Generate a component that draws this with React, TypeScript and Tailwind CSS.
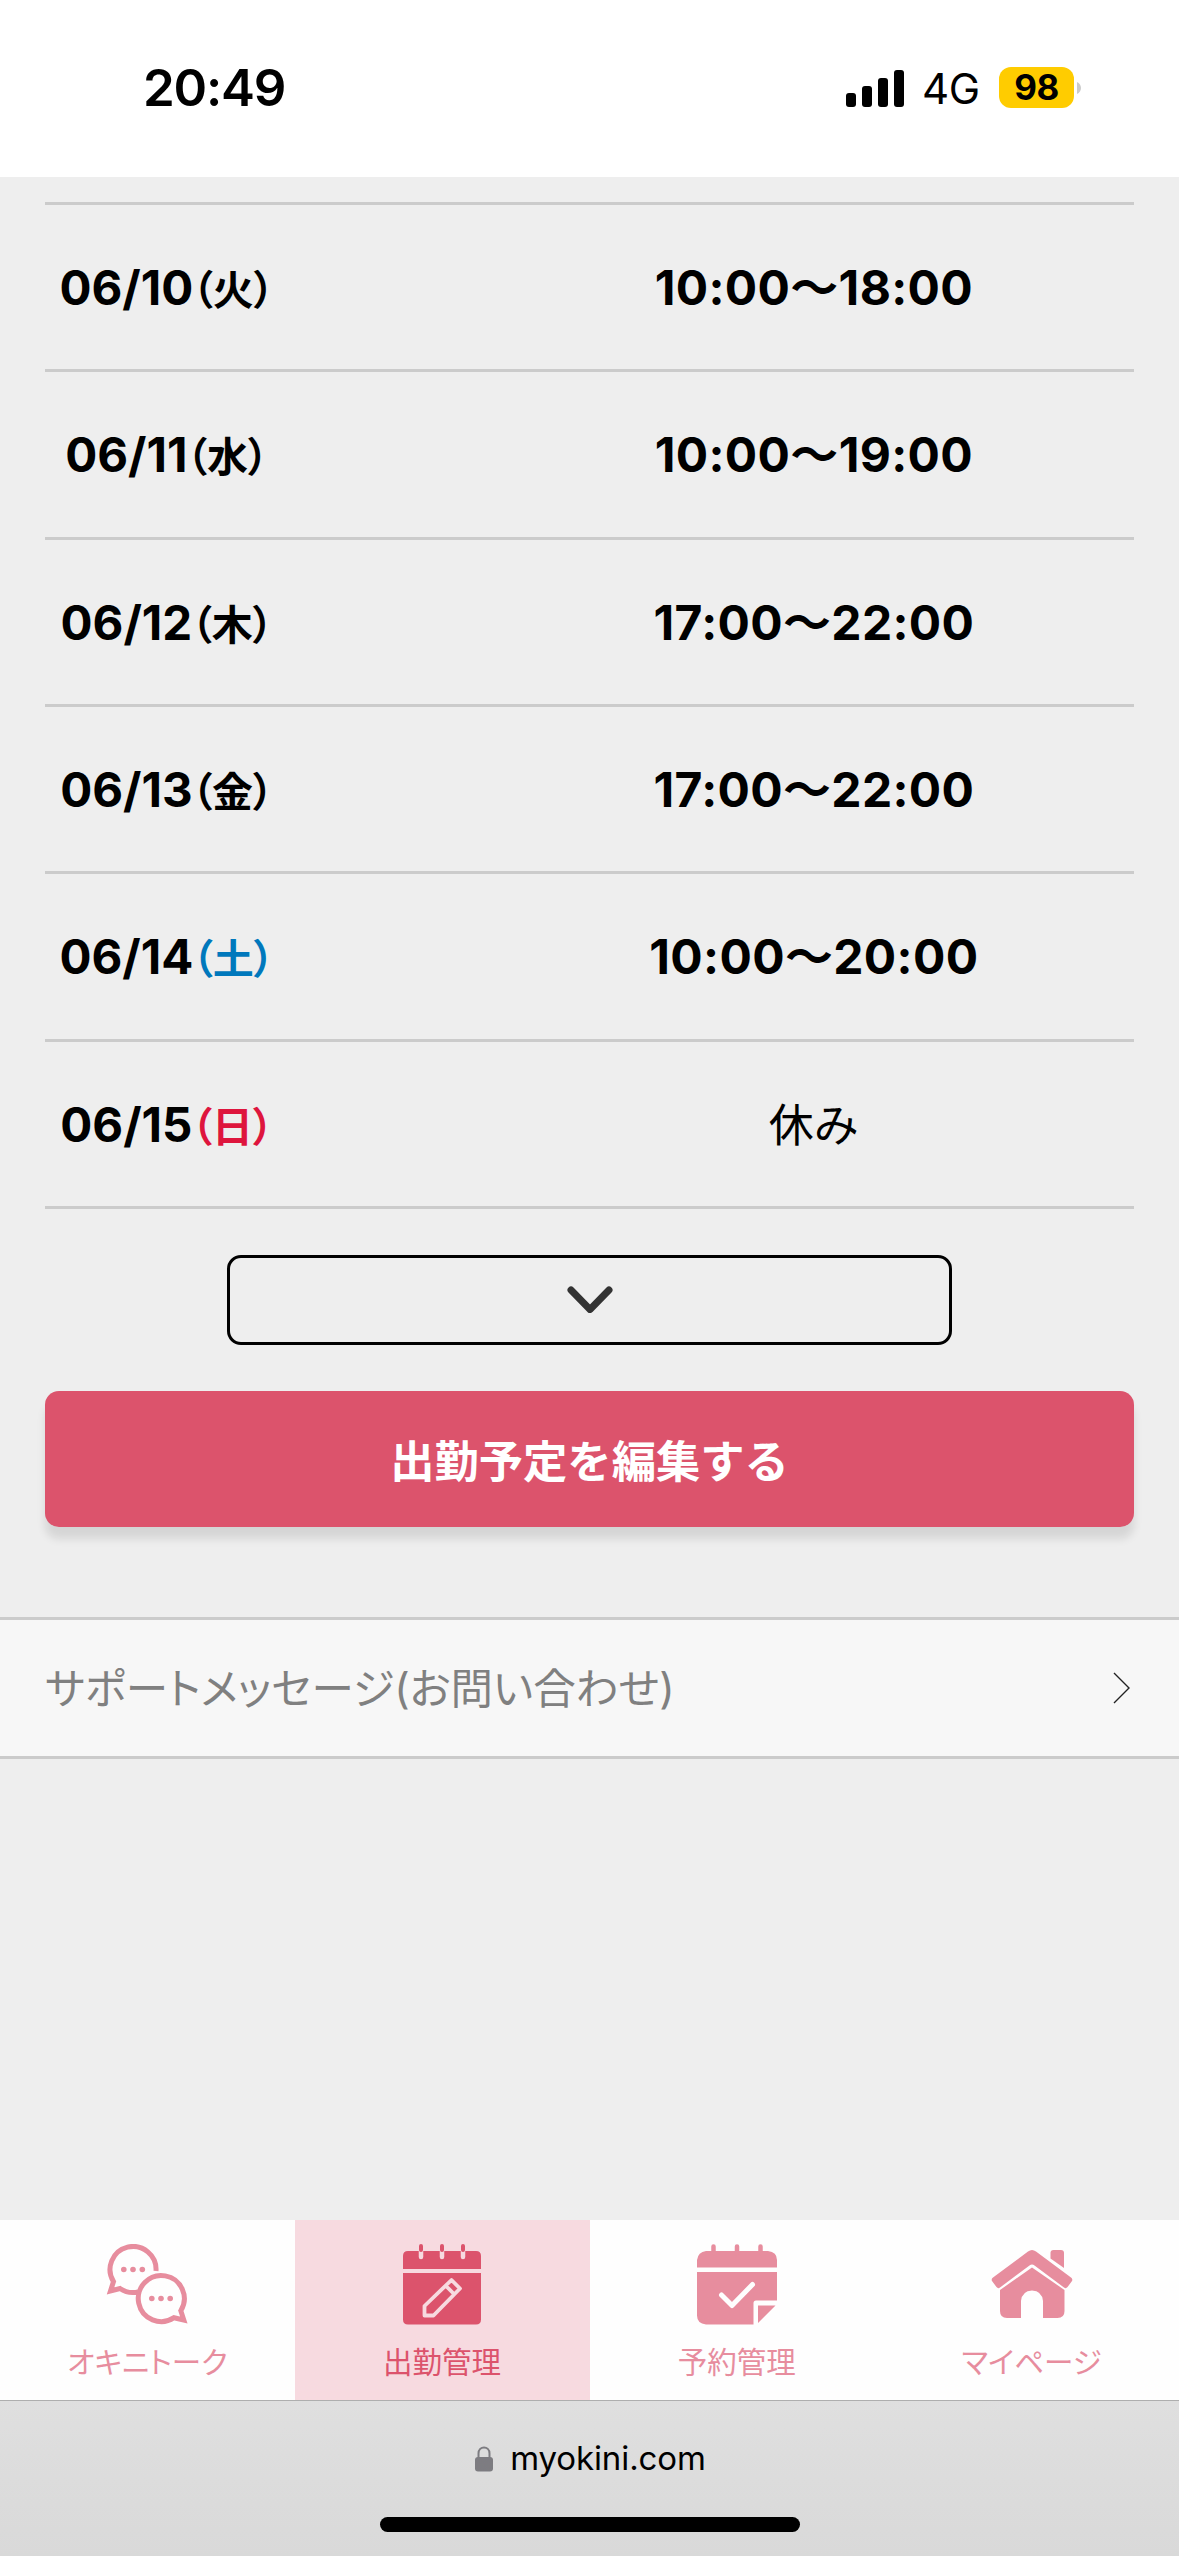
import React from 'react';

type Shift = {
    date: string;
    day: string;
    dayClass: string;
    time: string | null;
};

const shifts: Shift[] = [
    { date: '06/10', day: '火', dayClass: 'text-black', time: '10:00〜18:00' },
    { date: '06/11', day: '水', dayClass: 'text-black', time: '10:00〜19:00' },
    { date: '06/12', day: '木', dayClass: 'text-black', time: '17:00〜22:00' },
    { date: '06/13', day: '金', dayClass: 'text-black', time: '17:00〜22:00' },
    { date: '06/14', day: '土', dayClass: 'text-[#0078bc]', time: '10:00〜20:00' },
    { date: '06/15', day: '日', dayClass: 'text-[#de153d]', time: null },
];

function StatusBar() {
    return (
        <header className="flex h-[177px] shrink-0 items-start justify-between bg-white pl-[143px] pr-[98px]">
            <div className="mt-[58px] text-[51px] font-semibold leading-[60px] tracking-[-1.2px]">20:49</div>
            <div className="mt-[67px] flex h-[41px] items-center">
                <svg width="58" height="37" viewBox="0 0 58 37" className="mt-px">
                    <rect x="0" y="23" width="10" height="14" rx="3" />
                    <rect x="16" y="16" width="10" height="21" rx="3" />
                    <rect x="32" y="8" width="10" height="29" rx="3" />
                    <rect x="48" y="0" width="10" height="37" rx="3" />
                </svg>
                <span className="ml-[18px] mt-[2px] w-[77px] text-[42px] leading-[41px] tracking-[-0.5px]">4G</span>
                <span className="flex h-[41px] w-[75px] items-center justify-center rounded-[12px] bg-[#ffcc00] text-[35px] font-bold leading-[41px] tracking-[-0.5px]">
                    98
                </span>
                <svg width="4" height="12" viewBox="0 0 4 12" className="ml-[3px]">
                    <path d="M0 0C2.5 1 4 3.5 4 6S2.5 11 0 12Z" fill="#cbcbcb" />
                </svg>
            </div>
        </header>
    );
}

function ShiftRow({ shift }: { shift: Shift }) {
    return (
        <li className="flex h-[167.333px] items-center border-b-[3px] border-[#cbcbcb] pt-[2px]">
            <div className="flex w-[244px] items-center justify-center whitespace-nowrap font-bold">
                <span className="text-[47.5px] leading-[60px]">{shift.date}</span>
                <span className={`-ml-px mt-[4px] text-[41px] leading-[60px] [font-feature-settings:'palt'] ${shift.dayClass}`}>
                    （{shift.day}）
                </span>
            </div>
            <div className="ml-[205px] flex w-[641px] justify-center whitespace-nowrap">
                {shift.time ? (
                    <span className="text-[48px] font-bold leading-[60px] tracking-[0.35px]">{shift.time}</span>
                ) : (
                    <span className="mt-[2px] text-[45px] leading-[60px]">休み</span>
                )}
            </div>
        </li>
    );
}

function TalkIcon() {
    return (
        <svg width="82" height="82" viewBox="0 0 82 82" fill="none" stroke="#e78d9e" strokeWidth="5">
            <path d="M50 27A23 23 0 1 0 7.500 37.600L4.500 47L14 44.500A23 23 0 0 0 32 48" />
            <circle cx="17.800" cy="25.500" r="2.800" fill="#e78d9e" stroke="none" />
            <circle cx="27" cy="25.500" r="2.800" fill="#e78d9e" stroke="none" />
            <circle cx="36.300" cy="25.500" r="2.800" fill="#e78d9e" stroke="none" />
            <path d="M68 73.700A23 23 0 1 1 74.800 66.700L77.800 76Z" />
            <circle cx="45.800" cy="54.500" r="2.800" fill="#e78d9e" stroke="none" />
            <circle cx="55" cy="54.500" r="2.800" fill="#e78d9e" stroke="none" />
            <circle cx="64.200" cy="54.500" r="2.800" fill="#e78d9e" stroke="none" />
        </svg>
    );
}

function ScheduleIcon() {
    return (
        <svg width="80" height="82" viewBox="0 0 80 82">
            <path d="M6 7H74Q79 7 79 12V25H1V12Q1 7 6 7ZM1 29H79V75.500Q79 80.500 74 80.500H6Q1 80.500 1 75.500Z" fill="#dc536c" />
            <path d="M19 7V13M40 7V13M61 7V13" stroke="#f7dae0" strokeWidth="4.500" strokeLinecap="round" />
            <path d="M19 2V6M40 2V6M61 2V6" stroke="#dc536c" strokeWidth="4" strokeLinecap="round" />
            <path
                d="M22.500 71.500V62L49.500 36L58 44.500L31.500 71.500ZM43.500 41.500L52 50"
                fill="none"
                stroke="#f7dae0"
                strokeWidth="3.800"
                strokeLinejoin="round"
            />
        </svg>
    );
}

function ReservationIcon() {
    return (
        <svg width="80" height="82" viewBox="0 0 80 82">
            <path
                d="M9 7H71Q80 8 80 16V23.500H0V16Q1 8 9 7ZM0 28H80V56.500H59Q56.500 56.500 56.500 59V80.500H9Q0 79.500 0 71.500ZM61 61.500H78.500L61 79Z"
                fill="#e78d9e"
            />
            <path d="M16.500 2.500V9M40 2.500V9M63.500 2.500V9" stroke="#e78d9e" strokeWidth="4.500" strokeLinecap="round" />
            <path d="M24.500 51L35 61.500L55.500 40.500" fill="none" stroke="#fefefe" strokeWidth="5" strokeLinecap="round" strokeLinejoin="round" />
        </svg>
    );
}

function HomeIcon() {
    return (
        <svg width="82" height="82" viewBox="0 0 82 82" fill="#e78d9e">
            <path d="M37 7.500Q41 4.500 45 7.500L80 33.500Q82 35 81 37L76.500 43Q75 45 73 43.500L43.500 21.500Q41 19.500 38.500 21.500L9 43.500Q7 45 5.500 43L1 37Q0 35 2 33.500Z" />
            <path d="M59.500 14.500V9Q59.500 6 62.500 6H70Q73 6 73 9V24Z" />
            <path d="M9 46L41 23.500L73.500 46V67Q73.500 74 66.500 74H52V57Q51 47 41 46.500Q31 47 30 57V74H16Q9 74 9 67Z" />
        </svg>
    );
}

const tabs = [
    { label: 'オキニトーク', icon: <TalkIcon />, active: false },
    { label: '出勤管理', icon: <ScheduleIcon />, active: true },
    { label: '予約管理', icon: <ReservationIcon />, active: false },
    { label: 'マイページ', icon: <HomeIcon />, active: false },
];

function TabBar() {
    return (
        <nav className="grid h-[180px] shrink-0 grid-cols-4 bg-[#fefefe]">
            {tabs.map((tab) => (
                <a
                    key={tab.label}
                    className={`flex flex-col items-center pt-[24px] ${tab.active ? 'bg-[#f7dae0] text-[#dc536c]' : 'text-[#e78d9e]'}`}
                >
                    {tab.icon}
                    <span className="mt-[16px] text-[29.5px] leading-[40px] [font-feature-settings:'palt']">{tab.label}</span>
                </a>
            ))}
        </nav>
    );
}

function BrowserBar() {
    return (
        <footer className="flex h-[156px] shrink-0 flex-col items-center border-t border-[#aeaeae] bg-linear-to-b from-[#dfdfdf] to-[#d9d9d9]">
            <div className="mt-[36px] flex h-[44px] items-center pl-[2px]">
                <svg width="18" height="26" viewBox="0 0 18 26" className="mr-[17px]">
                    <path d="M3.500 12V7.500C3.500 -0.500 14.500 -0.500 14.500 7.500V12" fill="none" stroke="#7d7c81" strokeWidth="2" />
                    <rect x="0" y="11" width="18" height="14.500" rx="3" fill="#7d7c81" />
                </svg>
                <span className="-mt-[2px] text-[33px] leading-[44px] tracking-[-0.1px]">myokini.com</span>
            </div>
            <div className="mt-[36px] h-[15px] w-[420px] rounded-full bg-black" />
        </footer>
    );
}

export default function App() {
    return (
        <div className="flex h-[2556px] w-[1179px] flex-col overflow-hidden bg-[#eeeeee] font-['Inter','Noto_Sans_CJK_JP',sans-serif] text-black">
            <StatusBar />
            <main className="flex flex-1 flex-col">
                <ul className="mx-[45px] mt-[25px] border-t-[3px] border-[#cbcbcb]">
                    {shifts.map((shift) => (
                        <ShiftRow key={shift.date} shift={shift} />
                    ))}
                </ul>
                <button className="ml-[227px] mt-[46px] flex h-[90px] w-[725px] items-center justify-center rounded-[14px] border-[3px] border-black">
                    <svg width="46" height="27" viewBox="0 0 46 27" fill="none">
                        <path d="M4 4L23 23.500L42 4" stroke="#333333" strokeWidth="7" strokeLinecap="round" strokeLinejoin="round" />
                    </svg>
                </button>
                <button className="mx-[45px] mt-[46px] h-[136px] rounded-[14px] bg-[#dc536c] pt-[7px] text-[44.3px] font-bold text-white shadow-[0_12px_9px_rgba(0,0,0,0.1)]">
                    出勤予定を編集する
                </button>
                <a className="mt-[90px] flex h-[142px] items-center justify-between border-y-[3px] border-[#cbcbcb] bg-[#f7f7f7] pl-[45px] pr-[49px] text-[#808080]">
                    <span className="mt-[3px] text-[42.5px] leading-[60px] [font-feature-settings:'palt']">サポートメッセージ(お問い合わせ)</span>
                    <svg width="17" height="32" viewBox="0 0 17 32" fill="none" className="mt-px">
                        <path d="M1 1L16 16L1 31" stroke="#222222" strokeWidth="1.400" />
                    </svg>
                </a>
            </main>
            <TabBar />
            <BrowserBar />
        </div>
    );
}
